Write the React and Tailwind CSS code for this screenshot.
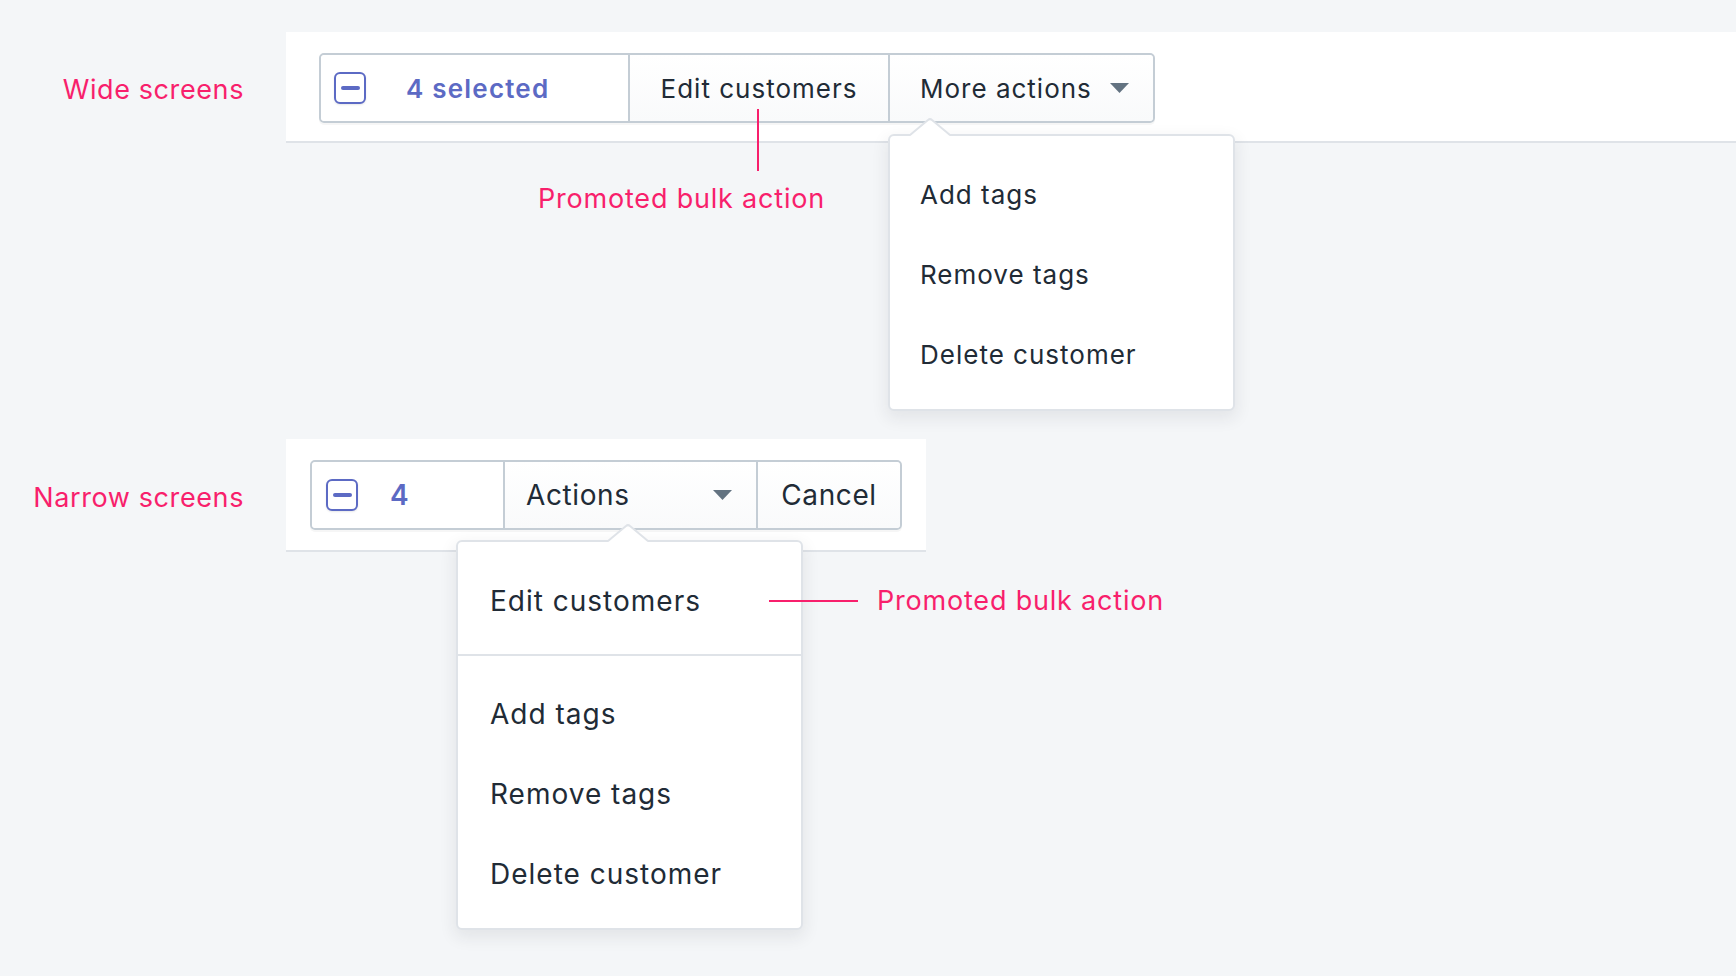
import React from "react";

const PINK = "text-[#f81f6c]";

function Checkbox() {
  return (
    <div className="w-[32px] h-[32px] shrink-0 rounded-[6px] border-2 border-[#5c6ac4] bg-white shadow-[0_1px_2px_rgba(22,29,37,0.1)] flex items-center justify-center">
      <div className="w-[19px] h-[4px] rounded-[2px] bg-[#5c6ac4]" />
    </div>
  );
}

function Caret() {
  return (
    <svg width="19" height="10" viewBox="0 0 19 10" className="shrink-0">
      <polygon points="0,0 19,0 9.5,10" fill="#637381" />
    </svg>
  );
}

function Tip({ left }) {
  return (
    <svg
      width="40"
      height="18"
      viewBox="0 0 40 18"
      className="absolute top-[-18px] z-20"
      style={{ left }}
    >
      <path d="M0 18 L18 2 Q20 0.2 22 2 L40 18 Z" fill="#ffffff" />
      <path d="M0 17 L18 2 Q20 0.2 22 2 L40 17" fill="none" stroke="#dfe3e8" strokeWidth="2" />
    </svg>
  );
}

function Item({ children, cls }) {
  return (
    <div className={`h-[80px] flex items-center text-[#212b36] ${cls}`}>{children}</div>
  );
}

function Label({ children }) {
  return (
    <div className={`w-[244px] shrink-0 pt-[4px] text-right text-[27px] leading-[32px] tracking-[0.6px] ${PINK}`}>{children}</div>
  );
}

const WIDE_ITEM = "pl-[30px] text-[26px] tracking-[1px]";
const NARROW_ITEM = "pl-[32px] text-[28px] tracking-[1px]";

export default function App() {
  return (
    <div className="min-h-screen w-full overflow-hidden bg-[#f4f6f8] pt-[32px] font-['Inter','Noto_Sans',sans-serif] text-[#212b36]">
      {/* Wide screens */}
      <div className="flex items-center">
        <Label>Wide screens</Label>
        <div className="ml-[42px] flex-1 bg-white border-b-2 border-[#dfe3e8] pl-[33px] pt-[21px] pb-[18px]">
          <div className="relative flex h-[70px] w-[836px] rounded-[5px] border-2 border-[#c4cdd5] shadow-[0_2px_0_rgba(22,29,37,0.04)]">
            <div className="w-[307px] flex items-center pl-[13px] bg-white rounded-l-[4px]">
              <Checkbox />
              <span className="ml-[40px] text-[26px] font-semibold tracking-[1.2px] text-[#5c6ac4]">4 selected</span>
            </div>
            <div className="w-[260px] border-l-2 border-[#c4cdd5] flex items-center justify-center bg-linear-to-b from-white to-[#f9fafb] text-[26px] tracking-[1px]">
              Edit customers
            </div>
            <div className="w-[265px] border-l-2 border-[#c4cdd5] flex items-center justify-between pl-[30px] pr-[24px] bg-linear-to-b from-white to-[#f9fafb] rounded-r-[4px] text-[26px] tracking-[1px]">
              <span>More actions</span>
              <Caret />
            </div>

            {/* annotation */}
            <div className="absolute left-[436px] top-[54px] w-[2px] h-[62px] bg-[#f81f6c] z-10" />
            <div className={`absolute left-[217px] top-[128px] whitespace-nowrap text-[27px] leading-[32px] tracking-[0.8px] ${PINK}`}>
              Promoted bulk action
            </div>

            {/* dropdown */}
            <div className="absolute left-[567px] top-[79px] z-10 w-[347px] rounded-[6px] border-2 border-[#dfe3e8] bg-white pt-[18px] pb-[15px] shadow-[0_6px_16px_2px_rgba(39,44,48,0.08)]">
              <Tip left={20} />
              <Item cls={WIDE_ITEM}>Add tags</Item>
              <Item cls={WIDE_ITEM}>Remove tags</Item>
              <Item cls={WIDE_ITEM}>Delete customer</Item>
            </div>
          </div>
        </div>
      </div>

      {/* Narrow screens */}
      <div className="mt-[296px] flex items-center">
        <Label>Narrow screens</Label>
        <div className="ml-[42px] w-[640px] bg-white border-b-2 border-[#dfe3e8] pl-[24px] pt-[21px] pb-[20px]">
          <div className="relative flex h-[70px] w-[592px] rounded-[5px] border-2 border-[#c4cdd5] shadow-[0_2px_0_rgba(22,29,37,0.04)]">
            <div className="w-[191px] flex items-center pl-[14px] bg-white rounded-l-[4px]">
              <Checkbox />
              <span className="ml-[32px] text-[28px] font-semibold text-[#5c6ac4]">4</span>
            </div>
            <div className="w-[253px] border-l-2 border-[#c4cdd5] flex items-center justify-between pl-[21px] pr-[24px] bg-linear-to-b from-white to-[#f9fafb] text-[28px] tracking-[0.6px]">
              <span>Actions</span>
              <Caret />
            </div>
            <div className="w-[144px] border-l-2 border-[#c4cdd5] flex items-center justify-center bg-linear-to-b from-white to-[#f9fafb] rounded-r-[4px] text-[28px] tracking-[0.6px]">
              Cancel
            </div>

            {/* dropdown */}
            <div className="absolute left-[144px] top-[78px] z-10 w-[347px] rounded-[6px] border-2 border-[#dfe3e8] bg-white shadow-[0_6px_16px_2px_rgba(39,44,48,0.08)]">
              <Tip left={150} />
              <div className="pt-[19px] pb-[13px] border-b-2 border-[#dfe3e8]">
                <Item cls={NARROW_ITEM}>Edit customers</Item>
              </div>
              <div className="pt-[18px] pb-[14px]">
                <Item cls={NARROW_ITEM}>Add tags</Item>
                <Item cls={NARROW_ITEM}>Remove tags</Item>
                <Item cls={NARROW_ITEM}>Delete customer</Item>
              </div>
            </div>

            {/* annotation */}
            <div className="absolute left-[457px] top-[123px] z-10 flex h-[32px] items-center whitespace-nowrap">
              <div className="w-[89px] h-[2px] bg-[#f81f6c]" />
              <span className={`ml-[19px] text-[27px] leading-[32px] tracking-[0.8px] ${PINK}`}>Promoted bulk action</span>
            </div>
          </div>
        </div>
      </div>
    </div>
  );
}
